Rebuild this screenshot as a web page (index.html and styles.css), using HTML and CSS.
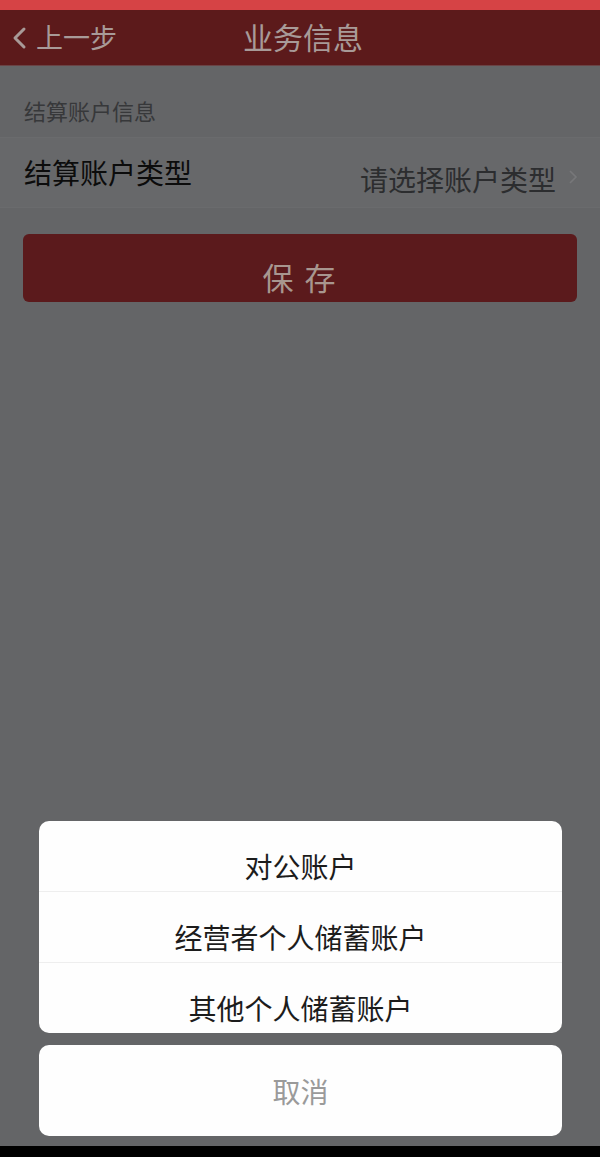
FILE: index.html
```html
<!DOCTYPE html>
<html lang="zh">
<head>
<meta charset="utf-8">
<link rel="stylesheet" href="styles.css">
</head>
<body>
<div class="screen">
  <div class="statusbar"></div>
  <header class="navbar">
    <div class="back">
      <svg class="back-icon" width="16" height="26" viewBox="0 0 16 26"><path d="M12 4 L3 13 L12 22" fill="none" stroke="#a89a98" stroke-width="3" stroke-linecap="round" stroke-linejoin="round"/></svg>
      <span>上一步</span>
    </div>
    <h1 class="title">业务信息</h1>
  </header>
  <main class="content">
    <div class="section-label">结算账户信息</div>
    <div class="form-row">
      <span class="row-label">结算账户类型</span>
      <span class="row-value">请选择账户类型
        <svg class="chev" width="10" height="16" viewBox="0 0 10 16"><path d="M2 2 L8 8 L2 14" fill="none" stroke="#77787a" stroke-width="1.6"/></svg>
      </span>
    </div>
    <div class="btn-wrap"><button class="save-btn">保 存</button></div>
  </main>
  <div class="sheet">
    <div class="sheet-group">
      <div class="sheet-item">对公账户</div>
      <div class="sheet-item">经营者个人储蓄账户</div>
      <div class="sheet-item">其他个人储蓄账户</div>
    </div>
    <div class="sheet-cancel">取消</div>
  </div>
  <div class="homebar"></div>
</div>
</body>
</html>
```

FILE: styles.css
```css
* { box-sizing: border-box; margin: 0; padding: 0; }
html, body { width: 600px; height: 1157px; overflow: hidden; }
body {
  background: #646567;
  font-family: "Noto Sans CJK SC", "Noto Sans", sans-serif;
}
.screen {
  width: 600px;
  height: 1157px;
  display: flex;
  flex-direction: column;
  background: #646567;
}
.statusbar { height: 10px; background: #d64345; flex: none; }
.navbar {
  height: 56px;
  flex: none;
  background: #5c1a1b;
  position: relative;
  display: flex;
  align-items: center;
  justify-content: center;
  border-bottom: 1px solid #6a4345;
}
.back {
  position: absolute;
  left: 12px;
  top: 12px;
  display: flex;
  align-items: center;
  gap: 8px;
  color: #a89a98;
  font-size: 27px;
  line-height: 30px;
}
.back-icon { margin-top: 2px; }
.title {
  font-size: 30px;
  font-weight: 400;
  color: #a89a98;
  margin-top: -4px;
  margin-left: 6px;
}
.content { flex: none; }
.section-label {
  height: 72px;
  padding: 31px 0 0 24px;
  font-size: 22px;
  line-height: 26px;
  color: #37383a;
  border-bottom: 1px solid #6a6b6d;
}
.form-row {
  height: 70px;
  background: #67686a;
  display: flex;
  justify-content: space-between;
  padding: 0 22px 0 24px;
  border-bottom: 1px solid #6a6b6d;
}
.row-label {
  font-size: 28px;
  color: #0c0c0c;
  margin-top: 18px;
  line-height: 32px;
}
.row-value {
  font-size: 28px;
  color: #2c2d2f;
  margin-top: 25px;
  line-height: 32px;
  display: flex;
  gap: 12px;
  align-items: flex-start;
}
.chev { margin-top: 6px; }
.btn-wrap { padding: 26px 23px 0 23px; }
.save-btn {
  width: 100%;
  height: 68px;
  border: none;
  border-radius: 6px;
  background: #5b1a1c;
  color: #a8968f;
  font-family: "Noto Sans CJK SC", sans-serif;
  font-size: 31px;
  letter-spacing: 2px;
  padding-top: 18px;
  line-height: 34px;
}
.sheet {
  margin-top: auto;
  padding: 0 38px 10px 39px;
  display: flex;
  flex-direction: column;
  gap: 12px;
}
.sheet-group {
  background: #fefefe;
  border-radius: 10px;
  overflow: hidden;
}
.sheet-item {
  height: 71px;
  display: flex;
  justify-content: center;
  align-items: flex-start;
  font-size: 28px;
  line-height: 32px;
  color: #1c1c1c;
  border-bottom: 1px solid #eeeeee;
  padding-top: 29px;
}
.sheet-item:last-child { border-bottom: none; height: 70px; }
.sheet-cancel {
  height: 91px;
  background: #fefefe;
  border-radius: 10px;
  display: flex;
  align-items: center;
  justify-content: center;
  font-size: 28px;
  color: #9a9a9a;
}
.homebar { height: 11px; background: #000; flex: none; }
```
